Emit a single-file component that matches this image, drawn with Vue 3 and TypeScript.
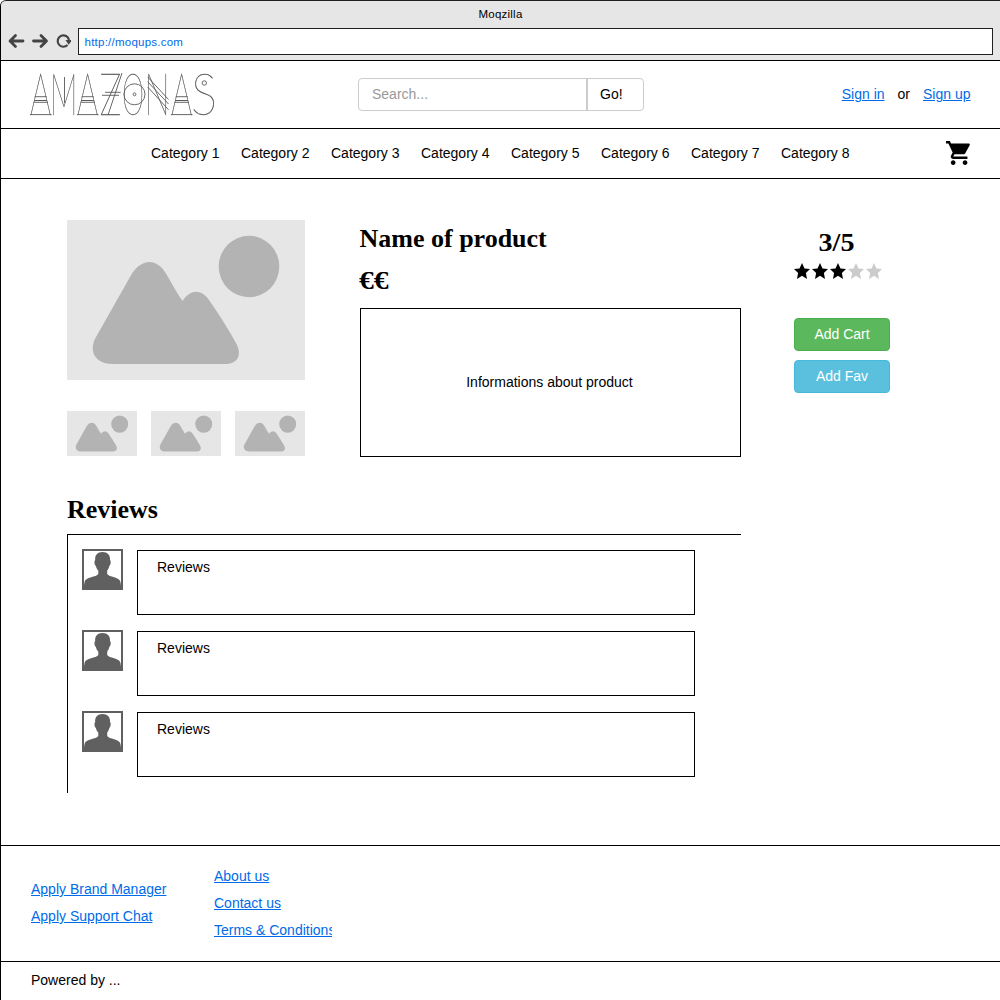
<script setup lang="ts">
interface LogoLetter {
  char: string
  x: number
  scale: number
}

const logoLetters: LogoLetter[] = [
  { char: 'A', x: 1, scale: 0.57 },
  { char: 'M', x: 21, scale: 0.53 },
  { char: 'A', x: 48, scale: 0.57 },
  { char: 'Z', x: 70.5, scale: 0.63 },
  { char: 'O', x: 93, scale: 0.48 },
  { char: 'N', x: 115.5, scale: 0.58 },
  { char: 'A', x: 142, scale: 0.57 },
  { char: 'S', x: 162, scale: 0.84 },
]
const logoTriangles: number[] = [1, 48, 142]
const categories: string[] = Array.from({ length: 8 }, (_, i) => `Category ${i + 1}`)
const rating = 3
const thumbnails = 3
const reviews: string[] = ['Reviews', 'Reviews', 'Reviews']
const teamLinks: string[] = ['Apply Brand Manager', 'Apply Support Chat']
const siteLinks: string[] = ['About us', 'Contact us', 'Terms & Conditions']
</script>

<template>
  <div class="window">
    <div class="chrome">
      <div class="title">Moqzilla</div>
      <div class="toolbar">
        <svg class="controls" width="64" height="18" viewBox="0 0 64 18" fill="none" stroke="#444" stroke-width="2.8" stroke-linecap="round" stroke-linejoin="round">
          <path d="M16 8H3.500M8.500 2.500L3 8L8.500 13.500" />
          <path d="M26.500 8H39M34 2.500L39.500 8L34 13.500" />
          <path d="M60.500 12A5.700 5.700 0 1 1 62 7" stroke-width="2.2" stroke-linecap="butt" />
          <path d="M58.500 7H65L61.700 11.800Z" fill="#444" stroke="none" />
        </svg>
        <div class="address">http://moqups.com</div>
      </div>
    </div>

    <header class="header">
      <svg class="logo" width="188" height="45" viewBox="0 0 188 45" role="img" aria-label="AMAZONAS">
        <text
          v-for="(letter, i) in logoLetters"
          :key="i"
          class="logo-letter"
          :transform="`translate(${letter.x} 43) scale(${letter.scale} 1)`"
        >{{ letter.char }}</text>
        <g fill="none" stroke="#555" stroke-width="0.9">
          <path v-for="x in logoTriangles" :key="x" :d="`M${x} 42.600h21.500M${x + 4.7} 24.700h12M${x + 3.7} 30.300h14.300`" />
          <path d="M35.500 5V31M76 20.300H91.700M73 23.300H90M79 43L93 1" />
          <circle cx="105.5" cy="22.300" r="10.5" />
          <circle cx="105.5" cy="22.300" r="1.400" />
          <path d="M118.700 5L139.500 27.500M118.700 9.700L139.500 32M118.700 15L139.500 37.700" />
          <circle cx="175.300" cy="11" r="2.200" />
        </g>
      </svg>
      <div class="search">
        <div class="search-field">Search...</div>
        <div class="search-button">Go!</div>
      </div>
      <div class="account">
        <a>Sign in</a><span>or</span><a>Sign up</a>
      </div>
    </header>

    <nav class="nav">
      <div class="categories">
        <span v-for="category in categories" :key="category">{{ category }}</span>
      </div>
      <svg class="cart" width="25" height="24" viewBox="1 2 21 20">
        <path d="M7 18c-1.100 0-1.990.9-1.990 2S5.900 22 7 22s2-.9 2-2-.9-2-2-2zM1 2v2h2l3.600 7.590-1.350 2.450c-.16.28-.25.61-.25.96 0 1.100.9 2 2 2h12v-2H7.420c-.14 0-.25-.11-.25-.25l.03-.12.9-1.630h7.450c.75 0 1.410-.41 1.750-1.030l3.580-6.490c.08-.14.12-.31.12-.48 0-.55-.45-1-1-1H5.210l-.94-2H1zm16 16c-1.100 0-1.990.9-1.990 2s.89 2 1.990 2 2-.9 2-2-.9-2-2-2z" />
      </svg>
    </nav>

    <main class="main">
      <section class="product">
        <div class="gallery">
          <svg class="photo" viewBox="0 0 238 160">
            <g id="landscape" fill="#b3b3b3">
              <ellipse cx="182" cy="46.500" rx="30.300" ry="30.700" />
              <path d="M65 53.500C75 38 90 38 99 53.500C104 62 109 72 115.500 81C124 69 134 69 142 80C152 94 161 109 169 123C175 134 172 144 158 144H46C28 144 21 131 29 117Z" />
            </g>
          </svg>
          <div class="thumbs">
            <svg v-for="n in thumbnails" :key="n" class="thumb" viewBox="0 0 238 160">
              <use href="#landscape" />
            </svg>
          </div>
        </div>

        <div class="details">
          <h1>Name of product</h1>
          <div class="price">€€</div>
          <div class="info">Informations about product</div>
        </div>

        <aside class="actions">
          <div class="score">{{ rating }}/5</div>
          <div class="stars">
            <svg v-for="n in 5" :key="n" width="16" height="16" viewBox="0 0 16 16" :fill="n <= rating ? '#000' : '#ccc'">
              <path d="M8 0L10.500 5.600L16 6.100L11.900 9.900L13 15.900L8 12.800L3 15.900L4.100 9.900L0 6.100L5.500 5.600Z" />
            </svg>
          </div>
          <button class="button add-cart" type="button">Add Cart</button>
          <button class="button add-fav" type="button">Add Fav</button>
        </aside>
      </section>

      <section class="reviews">
        <h2>Reviews</h2>
        <div class="review-list">
          <article v-for="(review, i) in reviews" :key="i" class="review">
            <svg class="avatar" width="41" height="41" viewBox="0 0 41 41">
              <rect x="1" y="1" width="39" height="39" fill="#fff" stroke="#606060" stroke-width="2" />
              <path fill="#606060" d="M20.500 3C25.500 3 28.500 6 28 11C29.300 12 28.700 16 27.300 17C26.800 19 26 20.500 25.200 21.500V25C27 28.500 37.500 27.500 38.500 33L39.500 40H1.500L2.500 33C3.500 27.500 14.500 28.500 16.300 25V21.500C15.200 20.500 14.400 19 13.900 17C12.400 16 12 12 13.200 11C12.700 6 15.500 3 20.500 3Z" />
            </svg>
            <div class="review-body">{{ review }}</div>
          </article>
        </div>
      </section>
    </main>

    <footer class="footer">
      <div class="team-links"><a v-for="link in teamLinks" :key="link">{{ link }}</a></div>
      <div class="site-links"><a v-for="link in siteLinks" :key="link">{{ link }}</a></div>
    </footer>
    <div class="powered">Powered by ...</div>
  </div>
</template>

<style>
body {
  background: #fff;
}
</style>

<style scoped>
.window {
  box-sizing: border-box;
  display: flex;
  flex-direction: column;
  width: 1000px;
  height: 1000px;
  overflow: hidden;
  border-left: 1px solid #000;
  border-top-left-radius: 6px;
  background: #fff;
  color: #000;
  font: 14px/20px "Liberation Sans", Arial, sans-serif;
}
.window * {
  box-sizing: border-box;
}
.chrome {
  flex: none;
  height: 61px;
  border-top: 1px solid #231f20;
  border-bottom: 1px solid #000;
  border-top-left-radius: 5px;
  background: #e6e6e6;
  font-size: 11.5px;
}
.title {
  height: 27px;
  line-height: 26px;
  text-align: center;
}
.toolbar {
  display: flex;
  align-items: center;
  gap: 7px;
  padding: 0 7px 0 6px;
}
.controls {
  flex: none;
}
.address {
  flex: 1;
  height: 27px;
  padding-left: 5.5px;
  border: 1px solid #231f20;
  background: #fff;
  color: #006be8;
  line-height: 26px;
}
.title,
.address {
  letter-spacing: 0.24px;
}
.header {
  display: flex;
  flex: none;
  align-items: center;
  height: 68px;
  padding: 0 29.5px 0 28px;
  border-bottom: 1px solid #000;
}
.logo {
  flex: none;
  overflow: visible;
  opacity: 0.98;
  will-change: opacity;
}
.logo-letter {
  fill: #555;
  stroke: #555;
  stroke-width: 0.4;
  font-family: Lato, sans-serif;
  font-size: 58.5px;
  font-weight: 100;
}
.search {
  display: flex;
  width: 286px;
  height: 33px;
  margin-left: 141px;
  border: 1px solid #ccc;
  border-radius: 4px;
  line-height: 31px;
}
.search-field {
  width: 229px;
  padding-left: 13px;
  border-right: 2px solid #ccc;
  color: #999;
}
.search-button {
  padding-left: 12px;
}
.account {
  display: flex;
  gap: 13px;
  margin: 0 0 1px auto;
}
a {
  color: #006be8;
  text-decoration: underline;
}
.nav {
  display: flex;
  flex: none;
  align-items: center;
  justify-content: space-between;
  height: 50px;
  padding: 0 29px 1px 150px;
  border-bottom: 1px solid #000;
}
.categories {
  display: flex;
}
.categories span {
  width: 90px;
}
.main {
  flex: none;
  height: 666px;
  padding: 41px 0 0 66px;
}
.product {
  display: flex;
}
.gallery {
  width: 238px;
  margin-right: 55px;
}
.photo,
.thumb {
  background: #e6e6e6;
}
.photo {
  display: block;
  width: 238px;
  height: 160px;
}
.thumbs {
  display: flex;
  gap: 14px;
  margin-top: 31px;
}
.thumb {
  width: 70px;
  height: 45px;
}
.details {
  width: 381px;
  margin-right: 53px;
}
h1,
h2,
.price,
.score {
  margin: 0;
  font: bold 26px/30px "Liberation Serif", "Times New Roman", serif;
}
h1 {
  margin: 4px 0 0 -0.5px;
}
.price {
  width: 60px;
  margin: 12px 0 0 -1px;
  transform: scaleX(1.14);
  transform-origin: 0 50%;
}
.info {
  display: flex;
  align-items: center;
  justify-content: center;
  height: 149px;
  margin-top: 12px;
  padding: 0 2px 2px 0;
  border: 1px solid #000;
}
.actions {
  width: 96px;
  padding-top: 8px;
}
.score {
  margin-left: -11px;
  transform: scaleX(1.08);
  text-align: center;
}
.stars {
  display: flex;
  gap: 2px;
  margin: 5px 0 39px;
}
.button {
  display: block;
  width: 96px;
  height: 33px;
  margin-bottom: 9px;
  padding: 0 0 2px;
  border: 1px solid;
  border-radius: 4px;
  color: #fff;
  font: inherit;
}
.add-cart {
  border-color: #4cae4c;
  background: #5cb85c;
}
.add-fav {
  border-color: #46b8da;
  background: #5bc0de;
}
.reviews {
  width: 674px;
  margin-top: 38px;
}
.review-list {
  height: 259px;
  margin-top: 9px;
  padding: 14px 0 0 14px;
  border-top: 1px solid #000;
  border-left: 1px solid #000;
}
.review {
  display: flex;
  gap: 14px;
  height: 81px;
}
.review-body {
  width: 558px;
  height: 65px;
  margin-top: 1px;
  padding: 6px 19px;
  border: 1px solid #000;
}
.footer {
  display: flex;
  flex: none;
  height: 116px;
  padding-left: 30px;
  border-top: 1px solid #000;
  line-height: 27px;
}
.footer a {
  display: block;
}
.team-links {
  width: 183px;
  padding-top: 30px;
}
.site-links {
  width: 118px;
  padding-top: 17px;
  overflow: hidden;
  white-space: nowrap;
}
.powered {
  flex: 1;
  padding: 8px 30px;
  border-top: 1px solid #000;
}
</style>
